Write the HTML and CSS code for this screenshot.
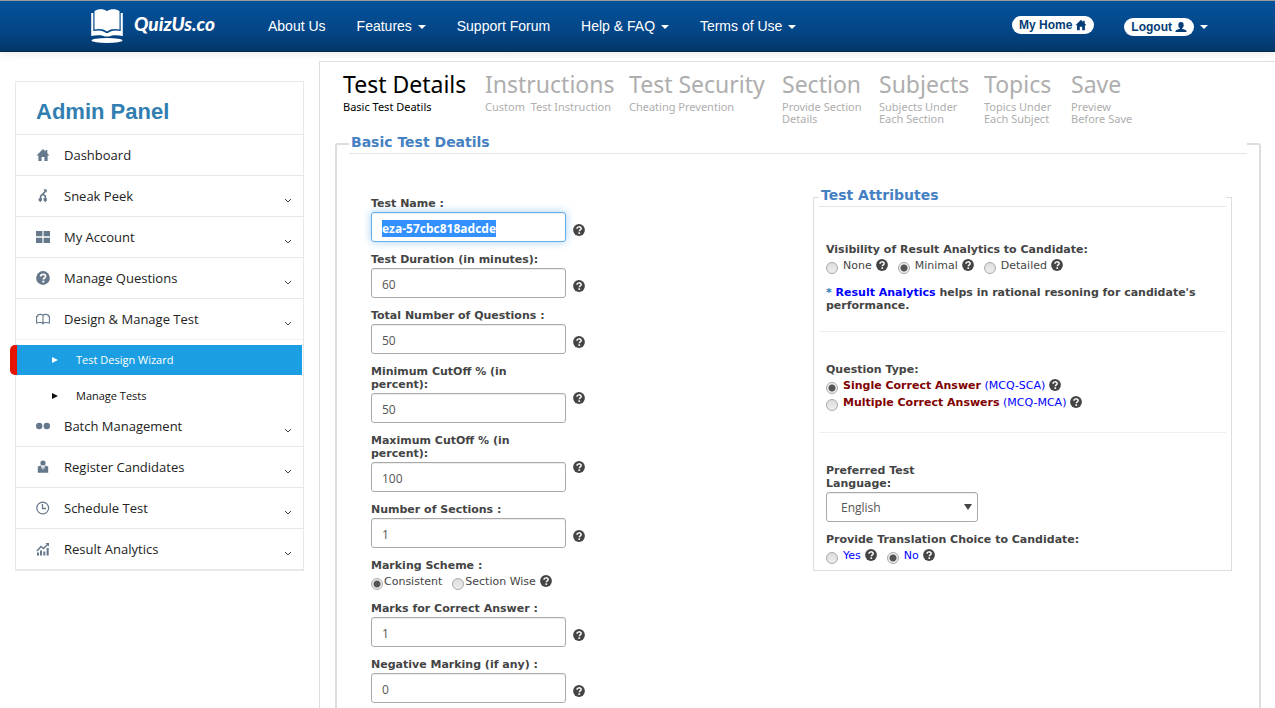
FILE: index.html
```html
<!DOCTYPE html>
<html lang="en">
<head>
<meta charset="utf-8">
<title>QuizUs.co - Test Design Wizard</title>
<link rel="stylesheet" href="styles.css">
</head>
<body>
<svg class="defs" aria-hidden="true">
  <symbol id="i-help" viewBox="0 0 12 12"><circle cx="6" cy="6" r="5.9" fill="currentColor"/><path d="M4 4.7C4 2.3 8.2 2.3 8.2 4.5C8.2 6 6.3 5.9 6.3 7.3" fill="none" stroke="#fff" stroke-width="1.5"/><rect x="5.4" y="8.3" width="1.7" height="1.6" fill="#fff"/></symbol>
  <symbol id="i-home" viewBox="0 0 14 14"><path d="M7 1L0.5 7.4H2.4V13H5.6V9H8.4V13H11.6V7.4H13.5L11.3 5.2V2H9.5V3.4Z" fill="currentColor"/></symbol>
  <symbol id="i-user" viewBox="0 0 14 12"><ellipse cx="7" cy="3.8" rx="3.1" ry="3.7" fill="currentColor"/><path d="M5.7 6.5H8.3V8L12.5 9.5Q13.5 10 13.5 11.8H0.5Q0.5 10 1.5 9.5L5.7 8Z" fill="currentColor"/></symbol>
</svg>

<header class="topbar">
  <a class="brand" href="#">
    <svg class="brand-mark" viewBox="0 0 32 34" aria-hidden="true">
      <path d="M3.5 2.2C7 -.3 12.500 -.3 16 2.200C19.500 -.3 25 -.3 28.500 2.200V20.500C24 19.400 19 20 16 22.500C13 20 8 19.400 3.500 20.500Z" fill="#fff"/>
      <path d="M.2 4H2.300V22C8 20.800 12.500 21.500 15 24H17C19.500 21.500 24 20.800 29.700 22V4H31.800V27C26 25.800 21 26.200 18 27.500H14C11 26.200 6 25.800 .2 27Z" fill="#fff"/>
      <ellipse cx="16" cy="31.500" rx="15.500" ry="2.400" fill="#fff"/>
    </svg>
    <span class="brand-name">QuizUs.co</span>
  </a>
  <nav class="menu" aria-label="Main">
    <a href="#">About Us</a>
    <a href="#">Features <i class="caret"></i></a>
    <a href="#">Support Forum</a>
    <a href="#">Help &amp; FAQ <i class="caret"></i></a>
    <a href="#">Terms of Use <i class="caret"></i></a>
  </nav>
  <div class="account">
    <a class="pill" href="#">My Home <svg class="pill-icon"><use href="#i-home"/></svg></a>
    <a class="logout" href="#"><span class="pill">Logout <svg class="pill-icon"><use href="#i-user"/></svg></span><i class="caret"></i></a>
  </div>
</header>

<div class="page">
  <aside class="sidebar">
    <h2 class="sidebar-title">Admin Panel</h2>
    <ul class="side-list">
      <li><a class="side-link" href="#"><svg class="side-icon"><use href="#i-home"/></svg>Dashboard</a></li>
      <li><a class="side-link" href="#"><svg class="side-icon" viewBox="0 0 14 14"><path d="M9.300 .5L8.800 3L4.600 7.200V10M6.800 5.200L9.300 7.200V10" fill="none" stroke="currentColor" stroke-width="1.600"/><path d="M7.500 .5H10.800V3.500ZM2.600 9.300H6.200L5.800 11.500L4.400 13.200L2.600 11.500ZM7.400 9.300H11L10.800 11.500L9.300 13.200L7.600 11.500Z" fill="currentColor"/></svg>Sneak Peek<svg class="chevron" viewBox="0 0 8 5"><path d="M1 1L4 4L7 1"/></svg></a></li>
      <li><a class="side-link" href="#"><svg class="side-icon" viewBox="0 0 14 14"><path d="M0 1H6.400V6.300H0ZM7.600 1H14V6.300H7.600ZM0 7.700H6.400V13H0ZM7.600 7.700H14V13H7.600Z" fill="currentColor"/></svg>My Account<svg class="chevron" viewBox="0 0 8 5"><path d="M1 1L4 4L7 1"/></svg></a></li>
      <li><a class="side-link" href="#"><svg class="side-icon"><use href="#i-help"/></svg>Manage Questions<svg class="chevron" viewBox="0 0 8 5"><path d="M1 1L4 4L7 1"/></svg></a></li>
      <li><a class="side-link" href="#"><svg class="side-icon" viewBox="0 0 14 14"><path d="M7 11.500C5.800 10.500 3.500 10.300 .6 11V4.200H1.800V2.800C4 2.200 6 2.400 7 3.400C8 2.400 10 2.200 12.200 2.800V4.200H13.400V11C10.500 10.300 8.200 10.500 7 11.500V3.400" fill="none" stroke="currentColor" stroke-width="1.100"/></svg>Design &amp; Manage Test<svg class="chevron" viewBox="0 0 8 5"><path d="M1 1L4 4L7 1"/></svg></a>
        <ul class="sub-list">
          <li><a class="sub-link sub-link-active" href="#"><svg class="sub-icon" viewBox="0 0 6 6"><path d="M0 0L6 3L0 6Z"/></svg>Test Design Wizard</a></li>
          <li><a class="sub-link" href="#"><svg class="sub-icon" viewBox="0 0 6 6"><path d="M0 0L6 3L0 6Z"/></svg>Manage Tests</a></li>
        </ul>
      </li>
      <li><a class="side-link side-link-joined" href="#"><svg class="side-icon" viewBox="0 0 14 14"><circle cx="3.200" cy="7" r="3.200" fill="currentColor"/><circle cx="10.800" cy="7" r="3.200" fill="currentColor"/></svg>Batch Management<svg class="chevron" viewBox="0 0 8 5"><path d="M1 1L4 4L7 1"/></svg></a></li>
      <li><a class="side-link" href="#"><svg class="side-icon" viewBox="0 0 14 14"><circle cx="7" cy="3" r="2.600" fill="currentColor"/><path d="M1.800 6.500L5 5.500L6.200 10L7 6L7.800 10L9 5.500L12.200 6.500V12.800H1.800Z" fill="currentColor"/></svg>Register Candidates<svg class="chevron" viewBox="0 0 8 5"><path d="M1 1L4 4L7 1"/></svg></a></li>
      <li><a class="side-link" href="#"><svg class="side-icon" viewBox="0 0 14 14"><circle cx="6.700" cy="7" r="5.900" fill="none" stroke="currentColor" stroke-width="1.200"/><path d="M6.500 3V7.500H10" fill="none" stroke="currentColor" stroke-width="1.300"/></svg>Schedule Test<svg class="chevron" viewBox="0 0 8 5"><path d="M1 1L4 4L7 1"/></svg></a></li>
      <li><a class="side-link" href="#"><svg class="side-icon" viewBox="0 0 14 14"><path d="M1 10.500H3V13.500H1ZM4 8.500H6V13.500H4ZM7.300 9.500H9.300V13.500H7.300ZM10.600 6H12.700V13.500H10.600Z" fill="currentColor"/><path d="M1 9L5 4.500L7.500 6.500L12 2" fill="none" stroke="currentColor" stroke-width="1.500"/><path d="M9.500 1H13V4.500Z" fill="currentColor"/></svg>Result Analytics<svg class="chevron" viewBox="0 0 8 5"><path d="M1 1L4 4L7 1"/></svg></a></li>
    </ul>
  </aside>

  <main class="content">
    <ol class="steps">
      <li class="step step-current"><span class="step-title">Test Details</span><span class="step-note">Basic Test Deatils</span></li>
      <li class="step"><span class="step-title">Instructions</span><span class="step-note">Custom &nbsp;Test Instruction</span></li>
      <li class="step"><span class="step-title">Test Security</span><span class="step-note">Cheating Prevention</span></li>
      <li class="step"><span class="step-title">Section</span><span class="step-note">Provide Section<br>Details</span></li>
      <li class="step"><span class="step-title">Subjects</span><span class="step-note">Subjects Under<br>Each Section</span></li>
      <li class="step"><span class="step-title">Topics</span><span class="step-note">Topics Under<br>Each Subject</span></li>
      <li class="step"><span class="step-title">Save</span><span class="step-note">Preview<br>Before Save</span></li>
    </ol>

    <form>
      <fieldset class="panel">
        <legend class="legend">Basic Test Deatils</legend>
        <div class="columns">
          <div class="fields">
            <div class="field"><div class="field-main"><label for="name">Test Name :</label><input class="input input-name" id="name" type="text" value="eza-57cbc818adcde"></div><svg class="help"><use href="#i-help"/></svg></div>
            <div class="field"><div class="field-main"><label for="duration">Test Duration (in minutes):</label><input class="input" id="duration" type="text" value="60"></div><svg class="help"><use href="#i-help"/></svg></div>
            <div class="field"><div class="field-main"><label for="total">Total Number of Questions :</label><input class="input" id="total" type="text" value="50"></div><svg class="help"><use href="#i-help"/></svg></div>
            <div class="field"><div class="field-main"><label for="min">Minimum CutOff % (in percent):</label><input class="input" id="min" type="text" value="50"></div><svg class="help"><use href="#i-help"/></svg></div>
            <div class="field"><div class="field-main"><label for="max">Maximum CutOff % (in percent):</label><input class="input" id="max" type="text" value="100"></div><svg class="help"><use href="#i-help"/></svg></div>
            <div class="field"><div class="field-main"><label for="sections">Number of Sections :</label><input class="input" id="sections" type="text" value="1"></div><svg class="help"><use href="#i-help"/></svg></div>
            <div class="group" role="radiogroup" aria-labelledby="scheme">
              <div class="heading" id="scheme">Marking Scheme :</div>
              <div class="choices">
                <label class="choice choice-tight"><input class="radio" type="radio" name="scheme" checked>Consistent</label>
                <label class="choice choice-tight"><input class="radio" type="radio" name="scheme">Section Wise<svg class="choice-help"><use href="#i-help"/></svg></label>
              </div>
            </div>
            <div class="field"><div class="field-main"><label for="marks">Marks for Correct Answer :</label><input class="input" id="marks" type="text" value="1"></div><svg class="help"><use href="#i-help"/></svg></div>
            <div class="field"><div class="field-main"><label for="negative">Negative Marking (if any) :</label><input class="input" id="negative" type="text" value="0"></div><svg class="help"><use href="#i-help"/></svg></div>
          </div>

          <fieldset class="attributes">
            <legend class="legend">Test Attributes</legend>
            <section class="block">
              <div class="group" role="radiogroup" aria-labelledby="visibility">
                <div class="heading" id="visibility">Visibility of Result Analytics to Candidate:</div>
                <div class="choices">
                  <label class="choice"><input class="radio" type="radio" name="visibility">None<svg class="choice-help"><use href="#i-help"/></svg></label>
                  <label class="choice"><input class="radio" type="radio" name="visibility" checked>Minimal<svg class="choice-help"><use href="#i-help"/></svg></label>
                  <label class="choice"><input class="radio" type="radio" name="visibility">Detailed<svg class="choice-help"><use href="#i-help"/></svg></label>
                </div>
              </div>
              <p class="note"><span class="star">*</span> <a href="#">Result Analytics</a> helps in rational resoning for candidate's performance.</p>
            </section>
            <section class="block" role="radiogroup" aria-labelledby="qtype">
              <div class="heading" id="qtype">Question Type:</div>
              <div class="choices choices-stacked">
                <label class="choice"><input class="radio" type="radio" name="qtype" checked><span><b class="kind">Single Correct Answer</b> <span class="blue">(MCQ-SCA)</span></span><svg class="choice-help"><use href="#i-help"/></svg></label>
                <label class="choice"><input class="radio" type="radio" name="qtype"><span><b class="kind">Multiple Correct Answers</b> <span class="blue">(MCQ-MCA)</span></span><svg class="choice-help"><use href="#i-help"/></svg></label>
              </div>
            </section>
            <section class="block">
              <div class="group language">
                <label for="language">Preferred Test Language:</label>
                <div class="select-wrap"><select class="select" id="language"><option>English</option></select></div>
              </div>
              <div role="radiogroup" aria-labelledby="translation">
                <div class="heading" id="translation">Provide Translation Choice to Candidate:</div>
                <div class="choices">
                  <label class="choice blue"><input class="radio" type="radio" name="translation">Yes<svg class="choice-help"><use href="#i-help"/></svg></label>
                  <label class="choice blue"><input class="radio" type="radio" name="translation" checked>No<svg class="choice-help"><use href="#i-help"/></svg></label>
                </div>
              </div>
            </section>
          </fieldset>
        </div>
      </fieldset>
    </form>
  </main>
</div>
<script src="app.js"></script>
</body>
</html>
```
FILE: styles.css
```css
* { box-sizing: border-box; }
body {
  margin: 0;
  background: #fff;
  color: #444;
  font: 11px/13px "DejaVu Sans", sans-serif;
}
a { text-decoration: none; }
ul, ol { list-style: none; margin: 0; padding: 0; }
.defs { display: none; }

.topbar {
  display: flex;
  align-items: center;
  height: 52px;
  padding: 0 67px 0 91px;
  border-top: 1px solid #999;
  border-bottom: 1px solid #022749;
  background: linear-gradient(#04519b, #044687 60%, #033769);
  box-shadow: 0 1px 10px rgba(0, 0, 0, .1);
  font-family: "Liberation Sans", sans-serif;
}
.brand { display: flex; gap: 11px; align-items: center; width: 162px; color: #fff; }
.brand-mark { width: 32px; height: 34px; }
.brand-name {
  padding-bottom: 4px;
  font: italic 900 19px/24px Lato, sans-serif;
}
.menu { display: flex; gap: 1px; }
.menu a { padding: 16px 15px; color: #fff; font-size: 14px; line-height: 20px; white-space: nowrap; }
.caret {
  display: inline-block;
  margin-left: 2px;
  vertical-align: middle;
  border: 4px solid transparent;
  border-top-color: #fff;
  border-bottom: 0;
}
.account { display: flex; align-items: center; gap: 30px; margin-left: auto; }
.account > .pill { margin-bottom: 2px; }
.pill {
  display: flex;
  align-items: center;
  gap: 3px;
  height: 18px;
  padding: 0 7px;
  border-radius: 9px;
  background: #fff;
  color: #043d75;
  font-size: 12px;
  font-weight: bold;
  white-space: nowrap;
}
.logout { display: flex; align-items: center; gap: 4px; margin-top: 2px; }
.pill-icon { width: 12px; height: 12px; }

.page { display: flex; align-items: flex-start; gap: 15px; padding: 9px 0 0 15px; }
.sidebar {
  flex: 0 0 289px;
  margin-top: 20px;
  border: 1px solid #e8e8e8;
  border-bottom-width: 2px;
}
.sidebar-title {
  margin: 0;
  padding: 16px 20px 8px;
  color: #317eb0;
  font: bold 22px/28px "Liberation Sans", sans-serif;
}
.side-link {
  display: flex;
  align-items: center;
  height: 41px;
  padding: 0 11px 0 20px;
  border-top: 1px solid #e8e8e8;
  color: #222;
  font: 13px/20px "Open Sans", sans-serif;
}
.side-link-joined { height: 40px; border-top: 0; }
.side-icon { width: 14px; height: 14px; margin-right: 14px; color: #66788c; }
.chevron { width: 8px; height: 5px; margin: 9px 0 0 auto; fill: none; stroke: #444; }
.sub-list {
  display: grid;
  gap: 10px;
  padding: 5px 1px 0;
  border-top: 1px solid #f3f3f3;
}
.sub-link {
  position: relative;
  display: flex;
  align-items: center;
  height: 21px;
  padding-left: 35px;
  color: #111;
  font: 11px/18px "Open Sans", sans-serif;
}
.sub-icon { width: 6px; height: 6px; margin-right: 18px; fill: currentColor; }
.sub-link-active { height: 30px; background: #1c9fe2; color: #fff; }
.sub-link-active::before {
  content: "";
  position: absolute;
  top: 0;
  left: -7px;
  width: 7px;
  height: 30px;
  border-radius: 5px 0 0 5px;
  background: #e51400;
}

.content {
  flex: 1;
  min-width: 0;
  padding: 8px 14px 0 15px;
  border: 1px solid #ddd;
  border-width: 1px 0 0 1px;
}
.steps {
  display: grid;
  grid-template-columns: 142px 144px 153px 97px 105px 87px auto;
  height: 64px;
  padding-left: 8px;
  color: #aeaeae;
  font-family: "Noto Sans", sans-serif;
}
.step-current { color: #000; }
.step-title { display: block; margin-bottom: 3px; font-size: 23px; line-height: 28px; white-space: nowrap; }
.step-note { display: block; font-size: 11px; line-height: 12px; white-space: nowrap; }

.panel {
  min-width: 0;
  margin: 0;
  padding: 0 12px;
  border: 2px solid #ddd;
  border-radius: 3px;
}
.legend {
  width: 100%;
  padding: 0 2px 2px;
  border-bottom: 1px solid #e5e5e5;
  color: #4580c2;
  font-size: 14px;
  font-weight: bold;
  line-height: 17px;
}
.columns {
  display: grid;
  grid-template-columns: 442fr 419fr;
  align-items: start;
  padding: 33px 15px 40px 22px;
}
.fields { padding-top: 10px; }
.field, .group { margin-bottom: 11px; }
.field { display: flex; align-items: flex-start; gap: 7px; }
.field-main { width: 195px; }
.field-main label, .heading, .language label {
  display: block;
  margin-bottom: 2px;
  font-weight: bold;
}
.help { width: 12px; height: 12px; margin-top: 27px; color: #444; }
.input, .select {
  display: block;
  width: 100%;
  height: 30px;
  padding: 2px 10px 0;
  border: 1px solid #aaa;
  border-radius: 3px;
  background: #fff;
  box-shadow: inset 0 1px 1px rgba(0, 0, 0, .075);
  color: #555;
  font: 12px/18px "Open Sans", sans-serif;
}
.input-name { font-weight: bold; }
.input:focus {
  outline: 0;
  border-color: #66afe9;
  box-shadow: inset 0 1px 1px rgba(0, 0, 0, .075), 0 0 8px rgba(102, 175, 233, .6);
}
.input::selection { background: #3390ff; color: #fff; }

.attributes {
  min-width: 0;
  margin: 0;
  padding: 0 5px;
  border: 1px solid #ddd;
}
.block { padding: 31px 7px 19px; border-bottom: 1px solid #eee; }
.legend + .block { padding-top: 36px; }
.block:last-child { padding-bottom: 5px; border-bottom: 0; }
.choices { display: flex; gap: 10px; }
.choices-stacked { display: block; padding-bottom: 1px; }
.choice { display: flex; align-items: flex-start; height: 17px; line-height: 15px; white-space: nowrap; }
.radio {
  appearance: none;
  width: 12px;
  height: 12px;
  margin: 4px 5px 0 0;
  border: 1px solid #aaa;
  border-radius: 50%;
  background: linear-gradient(#ddd, #eee);
}
.choice-tight .radio { margin-right: 1px; }
.radio:checked { background: radial-gradient(circle, #555 0 3px, #eee 4px); }
.choice-help { width: 12px; height: 12px; margin: 1px 0 0 4px; color: #444; }
.note { margin: 0; font-weight: bold; }
.note a, .blue { color: #00f; }
.star { color: #2a7ab0; }
.kind { color: #800000; }
.language { width: 152px; }
.language label { width: 120px; }
.select-wrap { position: relative; }
.select { appearance: none; padding-left: 14px; }
.select-wrap::after {
  content: "";
  position: absolute;
  top: 12px;
  right: 6px;
  border: 4px solid transparent;
  border-top: 6px solid #444;
  border-bottom: 0;
}
```
FILE: app.js
```js
const nameInput = document.getElementById("name");
nameInput.focus({ preventScroll: true });
nameInput.select();
```
